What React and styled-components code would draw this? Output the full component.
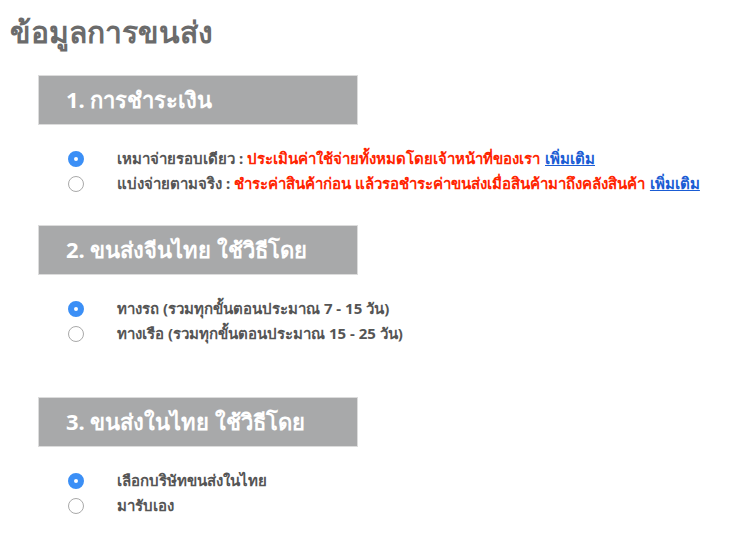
import React from "react";
import styled, { createGlobalStyle } from "styled-components";

const Global = createGlobalStyle`
  html, body { margin: 0; padding: 0; background: #fff; }
  body { font-family: "Noto Sans", "Liberation Sans", sans-serif; }
`;

const Page = styled.div`
  width: 734px;
  height: 537px;
  padding: 11px 0 0 10px;
  box-sizing: border-box;
  overflow: hidden;
`;

const Title = styled.h1`
  margin: 0 0 23px;
  font-size: 30px;
  line-height: 41px;
  font-weight: bold;
  color: #6b6b6b;
`;

const Section = styled.section`
  margin-left: 28px;
  margin-bottom: ${(p) => p.$gap}px;
`;

const Bar = styled.div`
  width: 320px;
  height: 50px;
  border: 1px solid #dcdcdc;
  background: #a8a9aa;
  display: flex;
  align-items: center;
  padding-left: 27px;
  font-size: 22px;
  font-weight: bold;
  color: #fff;
  box-sizing: border-box;
`;

const Options = styled.div`
  display: flex;
  flex-direction: column;
  padding: 21px 0 0 30px;
`;

const Option = styled.label`
  display: flex;
  align-items: center;
  height: 25px;
  font-size: 15px;
  font-weight: bold;
  color: #555;
  white-space: nowrap;
`;

const Radio = styled.span`
  width: 16px;
  height: 16px;
  border-radius: 50%;
  box-sizing: border-box;
  margin-right: 33px;
  flex: none;
  background: #fff;
  border: ${(p) => (p.$on ? "6px solid #3b8ff6" : "1px solid #a9a9a9")};
`;

const Note = styled.span`
  color: #ff2400;
`;

const More = styled.a`
  color: #1a5cd4;
  text-decoration: underline;
  margin-left: 5px;
`;

const sections = [
  {
    title: "1. การชำระเงิน",
    gap: 29,
    options: [
      { label: "เหมาจ่ายรอบเดียว", note: "ประเมินค่าใช้จ่ายทั้งหมดโดยเจ้าหน้าที่ของเรา", on: true },
      { label: "แบ่งจ่ายตามจริง", note: "ชำระค่าสินค้าก่อน แล้วรอชำระค่าขนส่งเมื่อสินค้ามาถึงคลังสินค้า" },
    ],
  },
  {
    title: "2. ขนส่งจีนไทย ใช้วิธีโดย",
    gap: 51,
    options: [
      { label: "ทางรถ (รวมทุกขั้นตอนประมาณ 7 - 15 วัน)", on: true },
      { label: "ทางเรือ (รวมทุกขั้นตอนประมาณ 15 - 25 วัน)" },
    ],
  },
  {
    title: "3. ขนส่งในไทย ใช้วิธีโดย",
    gap: 0,
    options: [
      { label: "เลือกบริษัทขนส่งในไทย", on: true },
      { label: "มารับเอง" },
    ],
  },
];

export default function App() {
  return (
    <Page>
      <Global />
      <Title>ข้อมูลการขนส่ง</Title>
      {sections.map((s) => (
        <Section key={s.title} $gap={s.gap}>
          <Bar>{s.title}</Bar>
          <Options>
            {s.options.map((o) => (
              <Option key={o.label}>
                <Radio $on={o.on} />
                {o.label}
                {o.note && (
                  <>
                    &nbsp;:&nbsp;<Note>{o.note}</Note>
                    <More href="#">เพิ่มเติม</More>
                  </>
                )}
              </Option>
            ))}
          </Options>
        </Section>
      ))}
    </Page>
  );
}
